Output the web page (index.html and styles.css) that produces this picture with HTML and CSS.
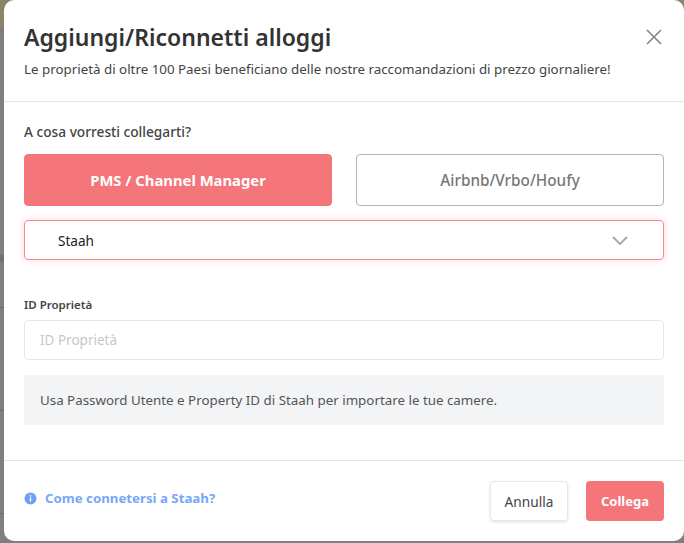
FILE: index.html
```html
<!DOCTYPE html>
<html lang="it">
<head>
<meta charset="utf-8">
<title>Aggiungi/Riconnetti alloggi</title>
<link rel="stylesheet" href="styles.css">
</head>
<body>
<div class="modal">
  <header class="head">
    <div class="title-row">
      <h1>Aggiungi/Riconnetti alloggi</h1>
      <svg class="close" width="16" height="16" viewBox="0 0 16 16"><path d="M1 1l14 14M15 1L1 15" stroke="#808080" stroke-width="1.5" fill="none"/></svg>
    </div>
    <p class="sub">Le proprietà di oltre 100 Paesi beneficiano delle nostre raccomandazioni di prezzo giornaliere!</p>
  </header>
  <main class="body">
    <div class="q">A cosa vorresti collegarti?</div>
    <div class="choices">
      <div class="choice active">PMS / Channel Manager</div>
      <div class="choice">Airbnb/Vrbo/Houfy</div>
    </div>
    <div class="select">
      <span>Staah</span>
      <svg width="16" height="9" viewBox="0 0 16 9"><path d="M1 1l7 7 7-7" stroke="#a8a8a8" stroke-width="1.9" fill="none"/></svg>
    </div>
    <label class="lbl">ID Proprietà</label>
    <div class="input">ID Proprietà</div>
    <div class="note">Usa Password Utente e Property ID di Staah per importare le tue camere.</div>
  </main>
  <footer class="foot">
    <a class="how">
      <svg width="13" height="13" viewBox="0 0 13 13"><circle cx="6.5" cy="6.5" r="6" fill="#6ea0f5"/><rect x="5.8" y="5.6" width="1.4" height="4" fill="#fff"/><rect x="5.8" y="3.2" width="1.4" height="1.4" fill="#fff"/></svg>
      <span>Come connetersi a Staah?</span>
    </a>
    <div class="btns">
      <div class="btn cancel">Annulla</div>
      <div class="btn ok">Collega</div>
    </div>
  </footer>
</div>
</body>
</html>
```
FILE: styles.css
```css
* { box-sizing: border-box; }
html, body { margin: 0; height: 100%; }
body {
  width: 684px; height: 543px; overflow: hidden;
  background-color: #7f7f7f;
  background-image:
    linear-gradient(#8b8468, #8b8468),
    linear-gradient(#6c6c6c, #6c6c6c),
    linear-gradient(#6c6c6c, #6c6c6c),
    linear-gradient(#6c6c6c, #6c6c6c),
    linear-gradient(#727272, #727272);
  background-size: 100% 27px, 100% 1px, 100% 1px, 100% 1px, 4px 7px;
  background-position: 0 0, 0 307px, 0 410px, 0 513px, 0 255px;
  background-repeat: no-repeat;
  padding-left: 4px;
  font-family: "Noto Sans", sans-serif;
}
.modal {
  width: 680px; height: 541px;
  background: #fff;
  border-radius: 10px;
  display: flex; flex-direction: column;
}
.head { height: 102px; padding: 20px 20px 0; border-bottom: 1px solid #e6e6e6; }
.title-row { display: flex; justify-content: space-between; align-items: center; padding-right: 2px; }
h1 { margin: 0; font-size: 23px; line-height: 34px; font-weight: 600; color: #333; }
.sub { margin: 5px 0 0; font-size: 13.35px; line-height: 20px; color: #444; }
.body { height: 359px; padding: 20px 20px 0; border-bottom: 1px solid #e6e6e6; }
.q { font-size: 13.7px; line-height: 20px; font-weight: 500; color: #444; }
.choices { display: flex; gap: 24px; margin-top: 12px; }
.choice {
  flex: 1; height: 52px; border: 1px solid #b5b5b5; border-radius: 4px;
  display: flex; align-items: center; justify-content: center;
  font-size: 15.3px; font-weight: 500; color: #777;
}
.choice.active { background: #f4757a; border-color: #f4757a; color: #fff; font-weight: 700; font-size: 14.8px; }
.select {
  margin-top: 14px; height: 40px; padding: 0 35px 0 33px;
  border: 1px solid #f8878c; border-radius: 4px;
  box-shadow: 0 0 6px rgba(245,118,123,.3);
  display: flex; align-items: center; justify-content: space-between;
  font-size: 13.6px; color: #222;
}
.lbl { display: block; margin-top: 36px; font-size: 11.5px; line-height: 18px; font-weight: 600; color: #444; }
.input {
  margin-top: 6px; height: 40px; padding: 0 15px;
  border: 1px solid #e6e6e6; border-radius: 4px;
  display: flex; align-items: center;
  font-size: 13.5px; color: #c8c8c8;
}
.note {
  margin-top: 15px; height: 50px; padding: 0 16px;
  background: #f3f4f6; border-radius: 4px;
  display: flex; align-items: center;
  font-size: 13.35px; color: #555;
}
.foot { flex: 1; padding: 0 20px; display: flex; justify-content: space-between; align-items: center; }
.how { display: flex; align-items: center; gap: 8px; margin-bottom: 6px; font-size: 13.25px; font-weight: 700; color: #78a6f8; }
.btns { display: flex; gap: 18px; }
.btn {
  width: 78px; height: 40px; border-radius: 4px;
  display: flex; align-items: center; justify-content: center;
  font-size: 13.7px;
}
.cancel { border: 1px solid #e6e6e6; color: #444; box-shadow: 0 1px 3px rgba(0,0,0,.12); }
.ok { background: #f4757a; color: #fff; font-weight: 700; font-size: 13px; }
```
